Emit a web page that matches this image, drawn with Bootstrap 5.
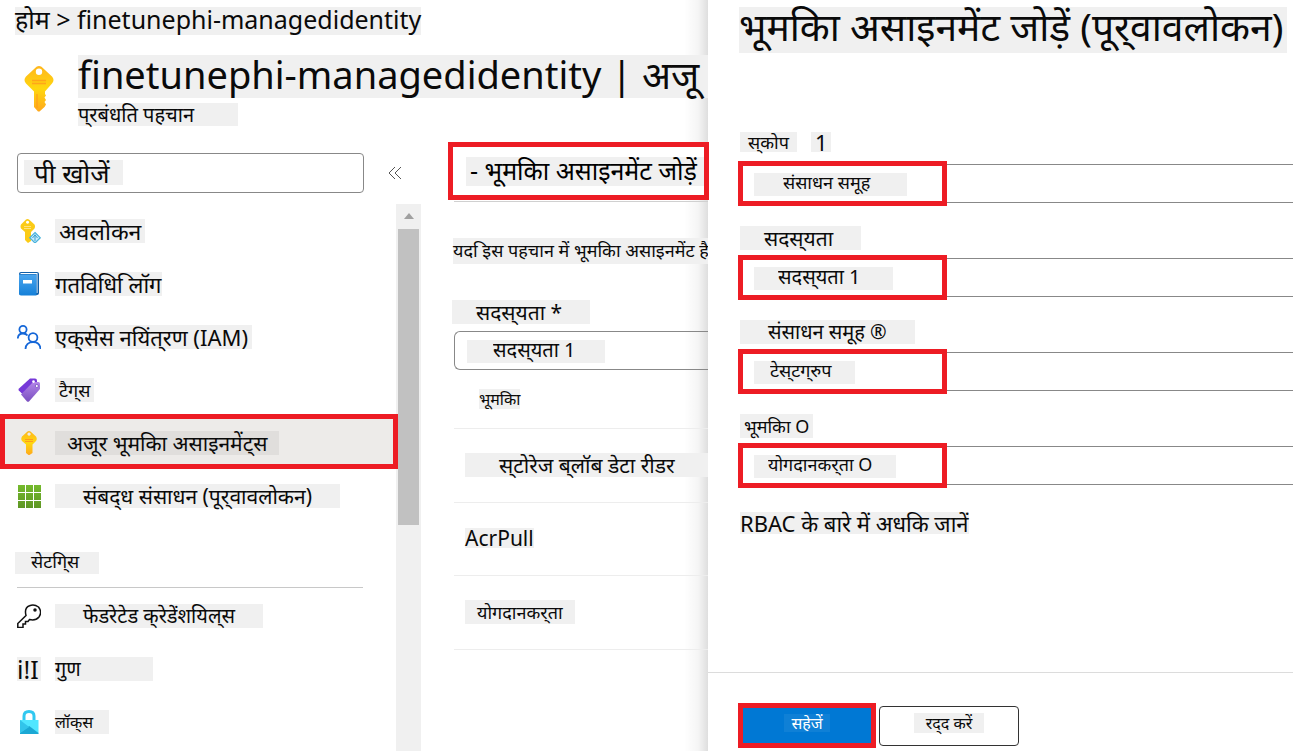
<!DOCTYPE html>
<html lang="hi">
<head>
<meta charset="utf-8">
<meta name="viewport" content="width=device-width, initial-scale=1">
<title>finetunephi-managedidentity</title>
<link rel="stylesheet" href="https://cdn.jsdelivr.net/npm/bootstrap@5.3.0/dist/css/bootstrap.min.css">
<style>
  :root { --chip: #f0f0f0; --mark: #ed1c24; --line: #888; }
  body { font-family: "Noto Sans", sans-serif; color: #0a0a0a; background: #fff; overflow: hidden; }
  a { color: inherit; text-decoration: none; }

  /* text sizes */
  .t16 { font-size: 16px; } .t18 { font-size: 18px; } .t20 { font-size: 20px; }
  .t21 { font-size: 21px; } .t22 { font-size: 22px; } .t23 { font-size: 23px; } .t25 { font-size: 25px; }
  .t38 { font-size: 38px; } .t39 { font-size: 39px; }

  /* grey plates behind text */
  .chip { display: inline-block; background: var(--chip); line-height: 24px; white-space: nowrap; }
  .pad-s { padding: 0 4px; } .pad-m { padding: 0 12px; } .pad-n { padding: 0 28px 0 24px; } .pad-l { padding: 0 28px; }
  .tail-t { padding-right: 4px; } .tail-s { padding-right: 16px; } .tail-l { padding-right: 72px; }

  /* red frames over the highlighted controls */
  .marked { position: relative; }
  .marked::after { content: ""; position: absolute; inset: -3px auto -3px -3px; width: 209px; border: 5px solid var(--mark); pointer-events: none; z-index: 2; }
  .marked.full::after { inset: -2px -2px 0 0; width: auto; }

  /* main blade */
  .shrinkable { min-width: 0; }
  .blade { background: linear-gradient(to left, rgba(0,0,0,.13), rgba(0,0,0,.04) 10px, transparent 24px) no-repeat; }
  .trail { padding: 7px 0 0 15px; }
  .trail .chip { line-height: 24px; padding-bottom: 4px; }
  .head { padding: 20px 0 0 16px; height: 107px; flex: none; }
  .head h1 { line-height: 38px; padding-bottom: 5px; font-weight: 400; margin: 0 0 5px; }
  .head .key { width: 46px; height: 48px; margin: 10px 16px 0 0; }
  .head .kind { width: 160px; line-height: 23px; }
  .side { width: 421px; padding-top: 11px; }
  .search { width: 347px; height: 40px; margin-left: 17px; padding: 0 16px; border: 1px solid var(--line); border-radius: 4px; font-size: 26px;
    background: linear-gradient(var(--chip), var(--chip)) 6px 6px / 99px 25px no-repeat #fff; }
  .search::placeholder { color: #0a0a0a; opacity: 1; }
  .fold { border: 0; background: none; padding: 0; width: 14px; height: 16px; margin-left: 24px; }
  .menu { margin-top: 11px; }
  .menu li > a { display: flex; align-items: center; gap: 14px; height: 53px; padding-left: 17px; }
  .menu svg { width: 24px; height: 24px; flex: none; }
  .menu .glyph { width: 24px; flex: none; }
  .menu .active { background: #edebe9; }
  .menu .active .chip { background: #e0dedc; }
  .group { height: 67px; padding: 30px 0 0 15px; }
  .group .chip { line-height: 19px; padding-bottom: 3px; display: block; width: 84px; padding-left: 16px; }
  .group hr { width: 346px; margin: 13px 0 0 2px; border-color: #c8c8c8; opacity: 1; }
  .bar { width: 25px; background: #f0f0f0; margin-top: 11px; padding: 9px 2px 0; }
  .bar .up { border: 5px solid transparent; border-top: 0; border-bottom: 6px solid #a0a0a0; margin: 0 auto 10px; width: 0; }
  .bar .thumb { height: 296px; background: #c1c1c1; }

  /* role list */
  .content { padding-left: 33px; }
  .cmd { margin: 0 -1px 0 -6px; border: 5px solid var(--mark); background: #fff; padding: 0 0 0 13px; height: 58px; text-align: left; position: relative; }
  .cmd .chip { line-height: 26px; padding: 0 4px 3px; display: block; }
  .rule { height: 1px; background: #d0d0d0; margin-top: 1px; }
  .note { margin: 36px 0 36px -1px; }
  .note.chip { line-height: 24px; padding-bottom: 2px; display: block; }
  .top-label { margin: 0 0 0 -2px; line-height: 24px; padding-bottom: 7px; }
  .field { display: block; width: 100%; height: 39px; appearance: none; border: 1px solid var(--line); border-right: 0; color: inherit;
    background: linear-gradient(var(--chip), var(--chip)) 12px 8px / var(--w, 138px) 23px no-repeat; padding: 0 0 2px var(--s, 38px); }
  .roles th, .roles td { font-weight: 400; padding: 0 0 0 11px; border-bottom: 1px solid #ededed; vertical-align: middle; }
  .roles th { height: 58px; padding-left: 25px; }
  .roles td { height: 74px; }
  .roles tr:nth-child(2) td { height: 73px; }
  .roles .wide { display: block; padding-left: 34px; }
  .tiny { line-height: 20px; }

  /* side panel */
  .panel { width: 585px; flex: none; background: #fff; padding-top: 7px; }
  .panel h2 { line-height: 46px; font-weight: 400; margin: 0 0 72px 31px; }
  .panel h2 .chip { line-height: 38px; padding: 0 4px 8px 0; vertical-align: top; }
  .pair { padding-left: 33px; height: 94px; }
  .pair .lbl { height: 39px; padding-top: 7px; display: flex; gap: 14px; margin-left: -1px; align-items: flex-start; }
  .w152 { --w: 153px; --s: 41px; } .w138 { --w: 139px; --s: 36px; } .w100 { --w: 101px; --s: 28px; } .w142 { --w: 142px; --s: 26px; }
  .more { margin: 6px 0 0 32px; }
  .more .chip { line-height: 22px; }
  .foot { border-top: 1px solid #dcdcdc; height: 79px; padding: 30px 0 0 30px; }
  .save { width: 138px; height: 45px; border: 5px solid var(--mark); border-radius: 0; background: #0078d4; color: #fff; padding: 0 0 5px; }
  .save .chip { background: #0f80d6; padding: 0 7px; line-height: 18px; }
  .drop { width: 140px; height: 40px; margin: 3px 0 0 3px; border: 1px solid #333; border-radius: 4px; background: #fff; padding: 0 0 7px; color: inherit; }
  .drop .chip { line-height: 20px; }
</style>
</head>
<body>
<div class="d-flex vh-100">

  <main class="blade shrinkable flex-fill d-flex flex-column">
    <nav class="trail d-flex t25"><span class="chip"><a href="#">होम</a> &gt; <a href="#">finetunephi-managedidentity</a></span></nav>

    <header class="head d-flex">
      <svg class="key flex-shrink-0" viewBox="0 0 46 48" aria-hidden="true">
        <defs><linearGradient id="gold" x1="0" y1="0" x2="0" y2="1"><stop offset="0" stop-color="#ffb61c"/><stop offset=".5" stop-color="#ffd70f"/><stop offset="1" stop-color="#ffa81c"/></linearGradient></defs>
        <path fill="url(#gold)" fill-rule="evenodd" d="M20.500 1.800Q23 0 25.500 1.800L36 11.500Q39 15 36 18.500L29 26.500V29L30 30.500L28.500 32.500L30 35L28.500 37L30 39.500L28.500 42L23.500 46.500H22L18 42V26.500L10 18.500Q7 15 10 11.500ZM23 3.500A3.200 3.200 0 1 0 23 9.900A3.200 3.200 0 1 0 23 3.500Z"/>
        <path stroke="#ff9c1c" stroke-width="1.300" d="M16 15.500H30M16 18.500H30M21 29V43" opacity=".8"/>
      </svg>
      <div class="flex-fill shrinkable">
        <h1 class="t38 chip d-block">finetunephi-managedidentity | अजू</h1>
        <div class="t20 chip kind d-block">प्&zwnj;रबंधति पहचान</div>
      </div>
    </header>

    <div class="d-flex flex-fill">
      <aside class="side d-flex flex-column flex-shrink-0">
        <div class="d-flex align-items-center">
          <input class="search" type="search" placeholder="पी खोजें" aria-label="खोजें">
          <button class="fold" aria-label="संक्षिप्त करें"><svg width="14" height="16" viewBox="0 0 14 16" class="d-block" fill="none" stroke="#555"><path d="M7 2L1 8L7 14M13 2L7 8L13 14"/></svg></button>
        </div>
        <div class="d-flex flex-fill">
          <ul class="menu list-unstyled mb-0 flex-fill">
            <li><a href="#"><svg viewBox="0 0 24 24"><path fill="#fbcb16" fill-rule="evenodd" d="M9 .5Q10.500-.5 12 .5L17.500 5.500Q18.500 7.500 17.500 9.500L14 13V22L11 24L8 21V13L4 9.500Q3 7.500 4 5.500ZM10.500 1.800a1.500 1.500 0 1 0 .1 0Z"/><path stroke="#ffe27a" d="M7 7.500H14M7 9.500H14"/><path fill="#c8ecfa" stroke="#4ab3dc" stroke-width="1.200" d="M18 13.500L23.300 18.800L18 24L12.700 18.800Z"/><path stroke="#3a9fd0" fill="none" d="M18 15.500V22M15.500 19L18 16L20.500 19"/></svg><span class="chip pad-s t23">अवलोकन</span></a></li>
            <li><a href="#"><svg viewBox="0 0 24 24"><defs><linearGradient id="book" x1="0" y1="0" x2="0" y2="1"><stop offset="0" stop-color="#4aa5ee"/><stop offset="1" stop-color="#1580d8"/></linearGradient></defs><path fill="#0f5ea8" d="M4 0H20Q22 0 22 2V21Q22 23 20 23H4Q2 23 2 21V2Q2 0 4 0Z"/><path fill="#fff" d="M4 1H20.500V21H19.500V2H3Z"/><path fill="url(#book)" d="M2 2.500H19.500V23.500H4Q2 23.500 2 21.500Z"/><path fill="#fff" d="M6 8H15V11.500H6Z"/></svg><span class="chip t22">गतविधि&nbsp;िलॉग</span></a></li>
            <li><a href="#"><svg viewBox="0 0 24 24" fill="none" stroke="#1567d8" stroke-width="1.800"><circle cx="6" cy="4.500" r="3.600"/><circle cx="16" cy="12.500" r="4.400"/><path d="M.8 13.500Q1 8.500 6 8.500Q9 8.500 10.500 10.500M8.500 24Q9 17.200 16 17.200Q23 17.200 23.500 24"/></svg><span class="chip tail-t t22">एक्&zwnj;सेस नयिंत्&zwnj;रण (IAM)</span></a></li>
            <li><a href="#"><svg viewBox="0 0 24 24"><defs><linearGradient id="tag" x1="0" y1="0" x2="0" y2="1"><stop offset="0" stop-color="#b385e8"/><stop offset="1" stop-color="#7a4fc0"/></linearGradient></defs><path fill="#7638d8" d="M13 .5H18Q20 .5 20 2.500V6L7 17.500L1.800 12.500Q1 11.500 2 10.500Z"/><path fill="url(#tag)" d="M16 4H21.500Q23 4 23 5.500V11L12 23.500Q11 24 10 23.500L4 16.500Z"/><circle cx="16.500" cy="3.600" r="1.300" fill="#fff"/><circle cx="19.800" cy="8" r="1.500" fill="#fff" stroke="#5b2eb0" stroke-width=".6"/></svg><span class="chip pad-s t18">टैग्&zwnj;स</span></a></li>
            <li class="marked full"><a href="#" class="active"><svg viewBox="0 0 24 24"><path fill="url(#gold)" fill-rule="evenodd" d="M10.500 .5Q12 -.5 13.500 .5L19 5.500Q20.500 8 19 10L15.500 13.500V22L12.500 24H11.500L9 22V13.500L5 10Q3.500 8 5 5.500ZM12 1.500a1.600 1.600 0 1 0 .1 0Z"/><path stroke="#ff9c1c" d="M8 8.500H16M8 10.500H16"/></svg><span class="chip pad-m t21">अजूर भूमकिा असाइनमेंट्&zwnj;स</span></a></li>
            <li><a href="#"><svg viewBox="0 0 24 24"><defs><linearGradient id="grid" x1="0" y1="0" x2="0" y2="24" gradientUnits="userSpaceOnUse"><stop offset="0" stop-color="#76bc2d"/><stop offset="1" stop-color="#5e9624"/></linearGradient></defs><path fill="url(#grid)" d="M1 1H8V8H1ZM9 1H16V8H9ZM17 1H24V8H17ZM1 9H8V16H1ZM9 9H16V16H9ZM17 9H24V16H17ZM1 17H8V24H1ZM9 17H16V24H9ZM17 17H24V24H17Z"/></svg><span class="chip pad-l t21">संबद्&zwnj;ध संसाधन (पूर्&zwnj;वावलोकन)</span></a></li>
            <li class="group t18"><span class="chip">सेटगि्&zwnj;स</span><hr></li>
            <li><a href="#"><svg viewBox="0 0 24 24" fill="none" stroke="#111" stroke-width="1.500"><path d="M9 11.500Q7 4 12.500 1.800Q17-.2 21.500 3Q25.500 8 22 13Q18.500 17 12.500 15.500L11 17.500H8.500V20H6V23.500H.8V19.500Z"/><circle cx="18" cy="6" r="1" fill="#111"/></svg><span class="chip pad-l t20">फेडरेटेड क्&zwnj;रेडेंशयिल्&zwnj;स</span></a></li>
            <li><a href="#"><span class="glyph t25 chip">i!I</span><span class="chip tail-l t20">गुण</span></a></li>
            <li><a href="#"><svg viewBox="0 0 24 24"><path fill="none" stroke="#32c8f0" stroke-width="3" d="M7 11V6Q7 1.500 12 1.500Q17 1.500 17 6V11"/><path fill="#50e6ff" d="M3 10H21.500V22.500Q21.500 24 20 24H4.500Q3 24 3 22.500Z"/><path fill="#1ba8d4" d="M3 23L12.200 16L21.500 23V24H3Z"/><path fill="#32c4ea" d="M3 10L12.200 17L3 23Z"/></svg><span class="chip tail-s t16">लॉक्&zwnj;स</span></a></li>
          </ul>
          <div class="bar"><div class="up"></div><div class="thumb"></div></div>
        </div>
      </aside>

      <section class="content shrinkable flex-fill d-flex flex-column">
        <button class="cmd t25"><span class="chip">- भूमकिा असाइनमेंट जोड़ें</span></button>
        <div class="rule"></div>
        <p class="note chip t18">यद&nbsp;िइस पहचान में भूमकिा असाइनमेंट है</p>
        <label for="sub" class="top-label t21"><span class="chip pad-n align-top">सदस्&zwnj;यता *</span></label>
        <select id="sub" class="field t20 rounded-start"><option>सदस्&zwnj;यता 1</option></select>
        <table class="roles w-100">
          <thead><tr><th class="t16"><span class="chip tiny">भूमकिा</span></th></tr></thead>
          <tbody>
            <tr><td class="t21"><span class="chip wide">स्&zwnj;टोरेज ब्&zwnj;लॉब डेटा रीडर</span></td></tr>
            <tr><td class="t21"><span class="chip tiny">AcrPull</span></td></tr>
            <tr><td class="t18"><span class="chip pad-m">योगदानकर्&zwnj;ता</span></td></tr>
          </tbody>
        </table>
      </section>
    </div>
  </main>

  <aside class="panel d-flex flex-column">
    <h2 class="t39"><span class="chip">भूमकिा असाइनमेंट जोड़ें (पूर्&zwnj;वावलोकन)</span></h2>
    <div class="pair">
      <label class="lbl t18" for="f1"><span class="chip px-2 tiny">स्&zwnj;कोप</span><span class="chip pad-s tiny t22">1</span></label>
      <div class="marked"><select id="f1" class="field w152 t18"><option>संसाधन समूह</option></select></div>
    </div>
    <div class="pair">
      <label class="lbl t21" for="f2"><span class="chip pad-n">सदस्&zwnj;यता</span></label>
      <div class="marked"><select id="f2" class="field w138 t20"><option>सदस्&zwnj;यता 1</option></select></div>
    </div>
    <div class="pair">
      <label class="lbl t20" for="f3"><span class="chip pad-l">संसाधन समूह ®</span></label>
      <div class="marked"><select id="f3" class="field w100 t18"><option>टेस्&zwnj;टग्&zwnj;रुप</option></select></div>
    </div>
    <div class="pair">
      <label class="lbl t18" for="f4"><span class="chip pad-s">भूमकिा O</span></label>
      <div class="marked"><select id="f4" class="field w142 t18"><option>योगदानकर्&zwnj;ता O</option></select></div>
    </div>
    <div class="more t22"><a href="#" class="chip">RBAC के बारे में अधकि जानें</a></div>
    <footer class="foot d-flex align-items-start mt-auto">
      <button class="save t16"><span class="chip">सहेजें</span></button>
      <button class="drop t16"><span class="chip pad-m">रद्&zwnj;द करें</span></button>
    </footer>
  </aside>
</div>
<script src="https://cdn.jsdelivr.net/npm/bootstrap@5.3.0/dist/js/bootstrap.bundle.min.js"></script>
</body>
</html>
